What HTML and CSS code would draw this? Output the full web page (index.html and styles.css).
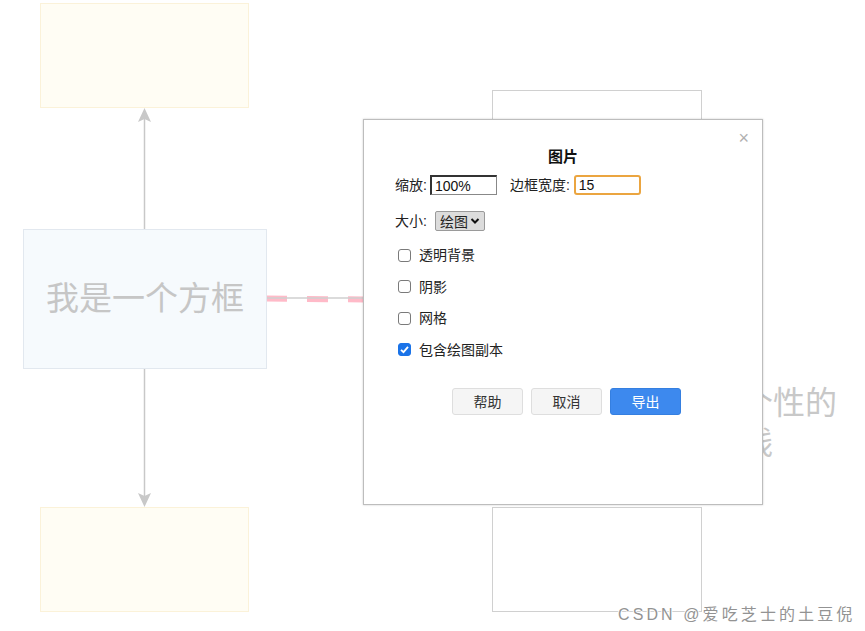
FILE: index.html
```html
<!DOCTYPE html>
<html lang="zh">
<head>
<meta charset="utf-8">
<title>图片</title>
<link rel="stylesheet" href="styles.css">
</head>
<body>
<div class="canvas">
  <svg class="wires" width="865" height="631" viewBox="0 0 865 631">
    <line x1="144.5" y1="229" x2="144.5" y2="118" stroke="#c8c8c8" stroke-width="1.5"/>
    <path d="M144.5 108 L151 122 L144.5 119 L138 122 Z" fill="#c8c8c8"/>
    <line x1="144.5" y1="368" x2="144.5" y2="497" stroke="#c8c8c8" stroke-width="1.5"/>
    <path d="M144.5 507 L151 493 L144.5 496 L138 493 Z" fill="#c8c8c8"/>
    <line x1="266" y1="298.5" x2="364" y2="299.5" stroke="#ffbac8" stroke-width="6" stroke-dasharray="21 20"/>
    <line x1="266" y1="298" x2="364" y2="298" stroke="#cfcfcf" stroke-width="1.3"/>
  </svg>
  <div class="node yellow top"></div>
  <div class="node blue mid"><span class="node-text">我是一个方框</span></div>
  <div class="node yellow bottom"></div>
  <div class="node plain rtop"></div>
  <div class="node plain rbottom"></div>
  <div class="edge-label">有个性的<br>连线</div>
  <div class="watermark">CSDN @爱吃芝士的土豆倪</div>

  <div class="dialog">
    <span class="close">×</span>
    <div class="title">图片</div>
    <div class="row first">
      <label class="lbl">缩放:</label>
      <input class="field zoom" type="text" value="100%">
      <label class="lbl gap">边框宽度:</label>
      <input class="field border" type="text" value="15">
    </div>
    <div class="row size">
      <label class="lbl">大小:</label>
      <div class="select"><span>绘图</span><svg width="10" height="8" viewBox="0 0 10 8"><path d="M1.5 2 L5 5.5 L8.5 2" fill="none" stroke="#111" stroke-width="2"/></svg></div>
    </div>
    <div class="check"><span class="box"></span>透明背景</div>
    <div class="check"><span class="box"></span>阴影</div>
    <div class="check"><span class="box"></span>网格</div>
    <div class="check"><span class="box on"><svg width="13" height="13" viewBox="0 0 13 13"><path d="M3 6.8 L5.5 9.2 L10 3.8" fill="none" stroke="#fff" stroke-width="1.8"/></svg></span>包含绘图副本</div>
    <div class="buttons">
      <button class="btn">帮助</button>
      <button class="btn">取消</button>
      <button class="btn primary">导出</button>
    </div>
  </div>
</div>
</body>
</html>
```
FILE: styles.css
```css
html, body {
  margin: 0;
  padding: 0;
  background: #fff;
}
.canvas {
  position: relative;
  width: 865px;
  height: 631px;
  overflow: hidden;
  font-family: "Liberation Sans", "Noto Sans CJK SC", sans-serif;
}
.wires {
  position: absolute;
  left: 0;
  top: 0;
}
.node {
  position: absolute;
  box-sizing: border-box;
}
.yellow {
  background: #fffdf4;
  border: 1.5px solid #fbf2d9;
}
.top {
  left: 40px;
  top: 3px;
  width: 209px;
  height: 105px;
}
.bottom {
  left: 40px;
  top: 507px;
  width: 209px;
  height: 105px;
}
.blue {
  left: 23px;
  top: 229px;
  width: 244px;
  height: 140px;
  background: #f6fafd;
  border: 1.5px solid #e2e8ef;
  display: flex;
  align-items: center;
  justify-content: center;
}
.node-text {
  font-family: "Noto Sans CJK SC", sans-serif;
  font-size: 33px;
  color: #c6c6c6;
  line-height: 40px;
  margin-bottom: 6px;
}
.plain {
  background: #fff;
  border: 1.5px solid #d0d0d0;
}
.rtop {
  left: 492px;
  top: 90px;
  width: 210px;
  height: 100px;
}
.rbottom {
  left: 492px;
  top: 507px;
  width: 210px;
  height: 105px;
}
.edge-label {
  position: absolute;
  left: 709px;
  top: 380px;
  font-family: "Noto Sans CJK SC", sans-serif;
  font-size: 32px;
  line-height: 40px;
  color: #c8c8c8;
  white-space: nowrap;
}
.watermark {
  position: absolute;
  left: 618px;
  top: 601px;
  font-size: 16px;
  letter-spacing: 3.1px;
  color: #939393;
  white-space: nowrap;
  text-shadow: 1px 0 0 #fff, -1px 0 0 #fff, 0 1px 0 #fff;
}

.dialog {
  position: absolute;
  left: 363px;
  top: 119px;
  width: 400px;
  height: 386px;
  box-sizing: border-box;
  background: #fff;
  border: 1.5px solid #bdbdbd;
  box-shadow: 0 0 2px rgba(0, 0, 0, 0.2);
  padding: 28px 0 0 31px;
  font-size: 14px;
  color: #222;
}
.close {
  position: absolute;
  right: 13px;
  top: 8px;
  font-size: 18px;
  color: #b0b0b0;
  line-height: 20px;
}
.title {
  font-weight: bold;
  font-size: 15px;
  line-height: 18px;
  text-align: center;
  margin-left: -31px;
  color: #111;
}
.row {
  display: flex;
  align-items: center;
  height: 20px;
}
.row.first {
  margin-top: 9px;
}
.row.size {
  margin-top: 16px;
}
.lbl {
  line-height: 20px;
  white-space: nowrap;
}
.lbl.gap {
  margin-left: 13px;
}
.field {
  box-sizing: border-box;
  height: 20px;
  width: 67px;
  margin: 0 0 0 3px;
  padding: 0 3px;
  font-family: "Liberation Sans", sans-serif;
  font-size: 14px;
  color: #111;
  background: #fff;
  outline: none;
}
.field.zoom {
  border: 1px solid #888;
  border-top: 2px solid #333;
  border-left: 2px solid #333;
}
.field.border {
  border: 2px solid #eba540;
  border-radius: 3px;
  margin-left: 4px;
}
.select {
  margin-left: 8px;
  box-sizing: border-box;
  width: 50px;
  height: 20px;
  background: #dcdcdc;
  border: 1px solid #9a9a9a;
  border-radius: 2px;
  display: flex;
  align-items: center;
  padding: 0 3px 0 4px;
  gap: 2px;
  font-size: 14px;
}
.check {
  display: flex;
  align-items: center;
  height: 20px;
  line-height: 20px;
  margin-top: 11.5px;
}
.row.size + .check {
  margin-top: 14px;
}
.box {
  box-sizing: border-box;
  width: 13px;
  height: 13px;
  border: 1px solid #7a7a7a;
  border-radius: 3px;
  background: #fff;
  margin: 0 8px 0 3px;
  display: flex;
}
.box.on {
  background: #1a73e8;
  border-color: #1a73e8;
}
.box.on svg {
  margin: -1px;
}
.buttons {
  display: flex;
  gap: 8px;
  margin-top: 28px;
  padding-left: 57px;
}
.btn {
  box-sizing: border-box;
  width: 71px;
  height: 27px;
  border: 1px solid #dedede;
  border-radius: 3px;
  background: #f5f5f5;
  font-family: "Liberation Sans", "Noto Sans CJK SC", sans-serif;
  font-size: 14px;
  color: #333;
  padding: 0;
}
.btn.primary {
  background: #3d89ee;
  border-color: #357fe0;
  color: #fff;
}
```
